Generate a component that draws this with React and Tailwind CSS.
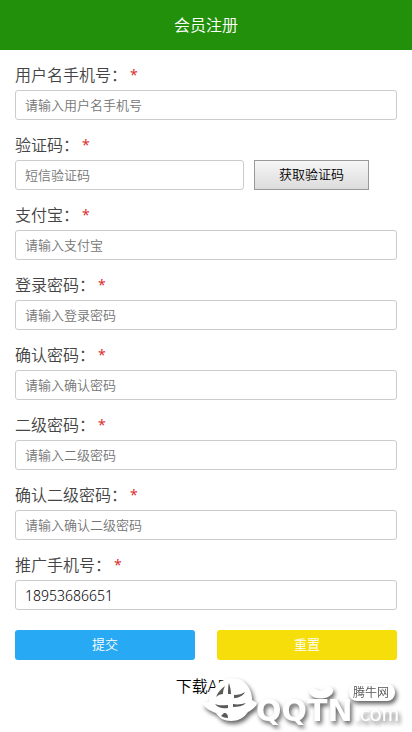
import React from 'react'

const fields = [
  { id: 'username', label: '用户名手机号：', placeholder: '请输入用户名手机号' },
  { id: 'code', label: '验证码：', placeholder: '短信验证码', sms: true },
  { id: 'alipay', label: '支付宝：', placeholder: '请输入支付宝' },
  { id: 'password', label: '登录密码：', placeholder: '请输入登录密码', type: 'password' },
  { id: 'password2', label: '确认密码：', placeholder: '请输入确认密码', type: 'password' },
  { id: 'second', label: '二级密码：', placeholder: '请输入二级密码', type: 'password' },
  { id: 'second2', label: '确认二级密码：', placeholder: '请输入确认二级密码', type: 'password' },
  { id: 'referrer', label: '推广手机号：', value: '18953686651' },
]

const Field = ({ id, label, placeholder, value, type = 'text', sms }) => (
  <div className="mb-2.5">
    <label htmlFor={id} className="flex h-[30px] items-center gap-[3px] text-base text-[#444]">
      {label}
      <span className="text-sm font-normal text-[#d93030]">*</span>
    </label>
    <div className="flex gap-2.5">
      <input
        id={id}
        name={id}
        type={type}
        defaultValue={value}
        placeholder={placeholder}
        className={`h-[30px] min-w-0 rounded-[3px] border border-[#ccc] bg-white px-[9px] text-black outline-none placeholder:text-[13px] placeholder:text-[#757575] ${value ? 'text-sm' : 'text-[13px]'} ${sms ? 'w-3/5' : 'w-full'}`}
      />
      {sms && (
        <button
          type="button"
          className="h-[30px] w-[30%] border border-[#999] bg-linear-to-b from-[#f6f6f6] to-[#dcdcdc] text-[13px] text-black"
        >
          获取验证码
        </button>
      )}
    </div>
  </div>
)

const Watermark = () => (
  <svg
    viewBox="0 0 214 58"
    className="pointer-events-none absolute right-0 -top-0.5 h-[58px] w-[214px] drop-shadow-[2px_3px_2px_rgba(0,0,0,0.6)]"
    fill="#fff"
  >
    {/* helmet emblem */}
    <path d="M11 27C13 20 17 16 20 12C27 5 39 5 45 9C51 14 54 20 54 28L59 31C58 35 54 38 50 40C46 46 40 49 33 49C26 49 21 46 18 41C12 39 7 36 4 31L11 30Z" />
    <g fill="#5a5a5a">
      <path d="M31 11C32 14 33 18 33 22L30 22C30 18 30 14 31 11Z" />
      <path d="M18 25C20 20 23 17 27 14C25 18 25 20 25 22C23 22 20 23 18 25Z" />
      <path d="M36 23C41 23 44 22 47 20C45 24 40 26 36 26Z" />
      <path d="M17 32C21 34 26 33 30 33L30 36C25 37 20 36 17 32Z" />
      <path d="M35 32C40 33 44 32 48 31C45 34 40 35 35 35Z" />
      <path d="M26 41C29 41 30 43 30 46C27 46 25 45 23 44Z" />
    </g>
    <path d="M112 22C109 17 114 15 118 17C121 20 127 19 129 15C134 14 137 18 134 22C129 28 116 28 112 22Z" />
    <text x="58" y="49" className="font-['DejaVu_Sans',sans-serif] text-[30px] font-bold">QQTN</text>
    <text x="157" y="49" className="font-['Lato',sans-serif] text-[21px] font-normal">.com</text>
    <rect x="151" y="12" width="46" height="17" rx="8" />
    <text x="155" y="25" className="font-['Noto_Sans_CJK_SC',sans-serif] text-[12px]" fill="#555">腾牛网</text>
  </svg>
)

const App = () => (
  <div className="min-h-screen bg-white font-['Noto_Sans','Noto_Sans_CJK_SC',sans-serif] font-[350]">
    <header className="flex h-[50px] items-center justify-center bg-[#22900b]">
      <h1 className="text-base font-[350] text-white">会员注册</h1>
    </header>
    <form className="px-[15px] pt-2.5" onSubmit={(e) => e.preventDefault()}>
      {fields.map((field) => (
        <Field key={field.id} {...field} />
      ))}
      <div className="mt-5 flex justify-between gap-[22px]">
        <button type="submit" className="h-[30px] flex-1 rounded-[3px] bg-[#27a9f3] text-[13px] text-white">
          提交
        </button>
        <button type="reset" className="h-[30px] flex-1 rounded-[3px] bg-[#f5de0a] text-[13px] text-white">
          重置
        </button>
      </div>
    </form>
    <div className="relative mt-3.5 text-center">
      <a href="#download" className="text-base text-black">下载APP</a>
      <Watermark />
    </div>
  </div>
)

export default App
